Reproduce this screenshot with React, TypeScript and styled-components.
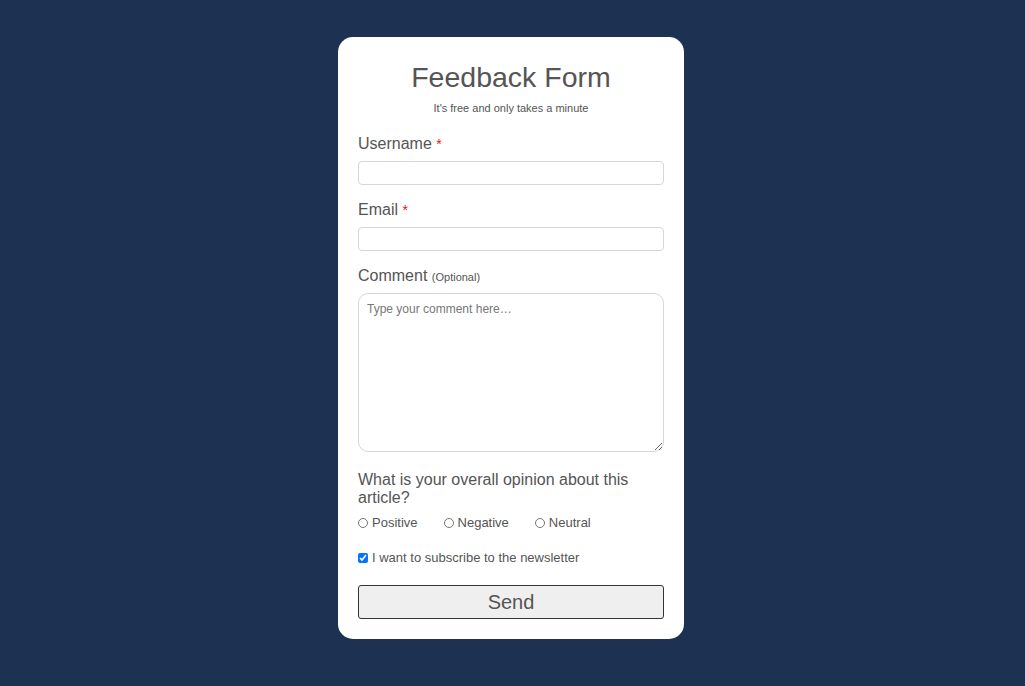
import styled, { createGlobalStyle } from "styled-components";

const GlobalStyle = createGlobalStyle`
  html, body {
    margin: 0;
    padding: 0;
    background-color: #1d3252;
  }
  body {
    font-family: "Liberation Sans", Arial, sans-serif;
    color: #555;
  }
`;

const Page = styled.div`
  min-height: 686px;
  display: flex;
  justify-content: center;
  align-items: flex-start;
  padding: 37px 3px 0 0;
  box-sizing: border-box;
`;

const Card = styled.form`
  width: 346px;
  box-sizing: border-box;
  background-color: white;
  border-radius: 15px;
  padding: 24px 20px 20px;
  display: flex;
  flex-direction: column;
`;

const Title = styled.h1`
  margin: 0;
  font-size: 28.5px;
  line-height: 32px;
  font-weight: 400;
  text-align: center;
  color: #555;
`;

const Subtitle = styled.p`
  margin: 8px 0 0;
  font-size: 11px;
  line-height: 14px;
  text-align: center;
  color: #555;
`;

const Field = styled.div<{ $gap: number }>`
  display: flex;
  flex-direction: column;
  margin-top: ${(props) => props.$gap}px;
`;

const Label = styled.label`
  height: 20px;
  font-size: 16px;
  line-height: 20px;
  color: #555;
  margin: 1px 0 7px;
`;

const Required = styled.span`
  color: #e8141f;
  font-size: 14px;
  vertical-align: top;
`;

const Hint = styled.span`
  font-size: 11px;
`;

const Input = styled.input`
  height: 24px;
  box-sizing: border-box;
  border: 1px solid #d6d6d6;
  border-radius: 4px;
  padding: 0 8px;
  font-family: inherit;
  outline: none;
`;

const Comment = styled.textarea`
  height: 159px;
  box-sizing: border-box;
  border: 1px solid #d6d6d6;
  border-radius: 10px;
  padding: 8px;
  font-family: inherit;
  font-size: 12px;
  resize: vertical;
  outline: none;
  &::placeholder {
    color: #777;
  }
`;

const Question = styled.p`
  margin: 19px 0 0;
  font-size: 16px;
  line-height: 18px;
  color: #555;
`;

const Options = styled.div`
  display: flex;
  gap: 26px;
  margin-top: 8px;
`;

const Choice = styled.label<{ $top?: number }>`
  display: flex;
  align-items: center;
  font-size: 13px;
  line-height: 16px;
  color: #555;
  margin-top: ${(props) => props.$top ?? 0}px;
  input {
    width: 10px;
    height: 10px;
    margin: 0 4px 0 0;
  }
`;

const SendButton = styled.button`
  margin-top: 19px;
  height: 34px;
  border: 1px solid #333;
  border-radius: 3px;
  background-color: #efefef;
  font-family: inherit;
  font-size: 20px;
  color: #555;
  cursor: pointer;
`;

function App() {
  return (
    <Page>
      <GlobalStyle />
      <Card onSubmit={(e) => e.preventDefault()}>
        <Title>Feedback Form</Title>
        <Subtitle>It's free and only takes a minute</Subtitle>
        <Field $gap={18}>
          <Label>
            Username <Required>*</Required>
          </Label>
          <Input type="text" />
        </Field>
        <Field $gap={14}>
          <Label>
            Email <Required>*</Required>
          </Label>
          <Input type="email" />
        </Field>
        <Field $gap={14}>
          <Label>
            Comment <Hint>(Optional)</Hint>
          </Label>
          <Comment placeholder="Type your comment here…" />
        </Field>
        <Question>What is your overall opinion about this article?</Question>
        <Options>
          <Choice>
            <input type="radio" name="opinion" />
            Positive
          </Choice>
          <Choice>
            <input type="radio" name="opinion" />
            Negative
          </Choice>
          <Choice>
            <input type="radio" name="opinion" />
            Neutral
          </Choice>
        </Options>
        <Choice $top={19}>
          <input type="checkbox" defaultChecked />I want to subscribe to the newsletter
        </Choice>
        <SendButton type="submit">Send</SendButton>
      </Card>
    </Page>
  );
}

export default App;
